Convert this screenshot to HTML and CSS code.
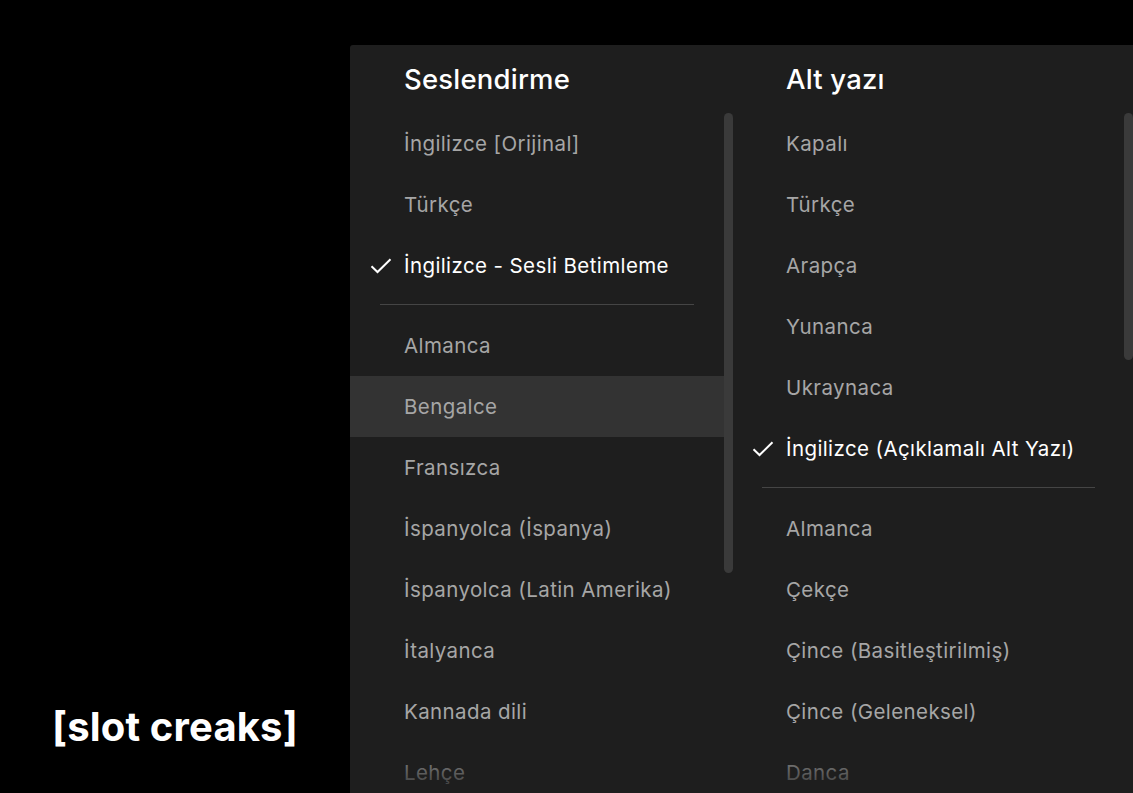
FILE: index.html
```html
<!DOCTYPE html>
<html lang="tr">
<head>
<meta charset="utf-8">
<title>Ses ve Alt yazı</title>
<link rel="stylesheet" href="styles.css">
</head>
<body>
<div class="stage">
  <div class="video">
    <div class="caption">[slot creaks]</div>
  </div>
  <div class="panel">
    <section class="col col-audio">
      <h2 class="col-title">Seslendirme</h2>
      <div class="list-wrap">
        <ul class="list">
          <li class="item">İngilizce [Orijinal]</li>
          <li class="item">Türkçe</li>
          <li class="item selected"><svg class="check" viewBox="0 0 22 16"><path d="M1.5 8.2 L7.5 14 L20.5 1.2" fill="none" stroke="currentColor" stroke-width="2"/></svg>İngilizce - Sesli Betimleme</li>
          <li class="sep"></li>
          <li class="item">Almanca</li>
          <li class="item hover">Bengalce</li>
          <li class="item">Fransızca</li>
          <li class="item">İspanyolca (İspanya)</li>
          <li class="item">İspanyolca (Latin Amerika)</li>
          <li class="item">İtalyanca</li>
          <li class="item">Kannada dili</li>
          <li class="item">Lehçe</li>
        </ul>
        <div class="track"><div class="thumb thumb-audio"></div></div>
      </div>
    </section>
    <section class="col col-subs">
      <h2 class="col-title">Alt yazı</h2>
      <div class="list-wrap">
        <ul class="list">
          <li class="item">Kapalı</li>
          <li class="item">Türkçe</li>
          <li class="item">Arapça</li>
          <li class="item">Yunanca</li>
          <li class="item">Ukraynaca</li>
          <li class="item selected"><svg class="check" viewBox="0 0 22 16"><path d="M1.5 8.2 L7.5 14 L20.5 1.2" fill="none" stroke="currentColor" stroke-width="2"/></svg>İngilizce (Açıklamalı Alt Yazı)</li>
          <li class="sep"></li>
          <li class="item">Almanca</li>
          <li class="item">Çekçe</li>
          <li class="item">Çince (Basitleştirilmiş)</li>
          <li class="item">Çince (Geleneksel)</li>
          <li class="item">Danca</li>
        </ul>
        <div class="track"><div class="thumb thumb-subs"></div></div>
      </div>
    </section>
    <div class="fade"></div>
  </div>
</div>
</body>
</html>
```

FILE: styles.css
```css
* { box-sizing: border-box; }
html, body {
  margin: 0;
  padding: 0;
  background: #000;
  width: 1133px;
  height: 793px;
  overflow: hidden;
  font-family: "Inter", "Liberation Sans", sans-serif;
}
.stage {
  display: flex;
  width: 1133px;
  height: 793px;
}
.video {
  width: 350px;
  flex: none;
  display: flex;
  flex-direction: column;
  justify-content: flex-end;
  padding: 0 0 42px 52px;
}
.caption {
  color: #fff;
  font-weight: 700;
  font-size: 40px;
  line-height: 48px;
  letter-spacing: 0.15px;
}
.panel {
  position: relative;
  margin-top: 45px;
  flex: 1;
  height: 748px;
  background: #1e1e1e;
  border-top-left-radius: 3px;
  display: flex;
  overflow: hidden;
}
.col {
  display: flex;
  flex-direction: column;
  min-height: 0;
}
.col-audio { width: 383px; }
.col-subs { width: 400px; }
.col-title {
  flex: none;
  margin: 0;
  height: 68px;
  padding: 18px 0 0 54px;
  color: #fff;
  font-size: 27.5px;
  font-weight: 500;
  line-height: 32px;
  letter-spacing: 0.2px;
}
.col-subs .col-title { padding-left: 53px; }
.list-wrap {
  flex: 1;
  min-height: 0;
  display: flex;
  overflow: hidden;
}
.list {
  list-style: none;
  margin: 0;
  padding: 0;
  flex: 1;
}
.item {
  height: 61px;
  display: flex;
  align-items: center;
  padding-left: 54px;
  color: #a6a6a6;
  font-size: 20.5px;
  letter-spacing: 0.4px;
  position: relative;
}
.col-subs .item { padding-left: 53px; }
.item.selected { color: #fff; }
.item.hover { background: #333333; }
.check {
  position: absolute;
  left: 20px;
  top: 23px;
  width: 22px;
  height: 16px;
  color: #fff;
}
.col-subs .check { left: 19px; }
.sep {
  height: 17px;
  margin: 0 30px;
  display: flex;
  align-items: center;
}
.col-subs .sep { margin: 0 29px; }
.sep::before {
  content: "";
  flex: 1;
  height: 1px;
  background: #454545;
}
.sep + .item { margin-top: 2px; }
.track {
  width: 9px;
  flex: none;
}
.thumb {
  width: 9px;
  border-radius: 5px;
  background: #3a3a3a;
}
.thumb-audio { height: 460px; }
.thumb-subs { height: 247px; }
.fade {
  position: absolute;
  left: 0;
  right: 0;
  bottom: 0;
  height: 54px;
  background: linear-gradient(to bottom, rgba(30,30,30,0), rgba(30,30,30,0.85));
  pointer-events: none;
}
```
